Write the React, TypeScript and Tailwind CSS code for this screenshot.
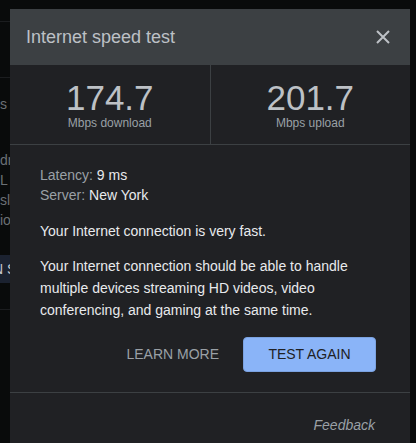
import React from "react";

const font = { fontFamily: '"Liberation Sans", Arial, sans-serif' };

function CloseIcon() {
  return (
    <svg width="14" height="14" viewBox="0 0 14 14" fill="none">
      <path d="M1 1L13 13M13 1L1 13" stroke="#bdc1c6" strokeWidth="2" />
    </svg>
  );
}

function Stat({ value, label }: { value: string; label: string }) {
  return (
    <div className="flex flex-1 flex-col items-center pt-[15px]">
      <div className="text-[35px] leading-[36px] text-[#bdc1c6]">{value}</div>
      <div className="text-[12px] leading-[14px] text-[#9aa0a6]">{label}</div>
    </div>
  );
}

export default function App() {
  return (
    <div className="relative h-[443px] w-[416px] overflow-hidden bg-[#090b0b]" style={font}>
      {/* page behind the dialog, visible only at the left edge */}
      <div className="flex w-[10px] flex-col overflow-hidden">
        <div className="h-[22px] w-[40px] border-b border-[#1b1d1f]" />
        <div className="h-[56px] w-[40px] border-b border-[#1b1d1f]" />
        <div className="w-[40px] whitespace-nowrap pt-[17px] text-[14px] leading-[18px] text-[#6b7075]">s t</div>
        <div className="w-[40px] whitespace-nowrap pt-[37px] text-[14px] leading-[20px] text-[#6b7075]">
          <div>dr</div>
          <div>L n</div>
          <div>sl</div>
          <div>io</div>
        </div>
        <div className="mt-[25px] h-[28px] w-[40px] whitespace-nowrap bg-[#1b2230] text-[14px] leading-[28px] text-[#c4c8cd]">
          <span className="ml-[-7px]">N S</span>
        </div>
        <div className="h-[27px] w-[40px] border-b border-[#1b1d1f]" />
      </div>

      {/* dialog */}
      <div className="absolute left-[10px] top-[9px] w-[400px] bg-[#202124]">
        <div className="flex h-[56px] items-center justify-between bg-[#3c4043] pl-[16px] pr-[20px]">
          <div className="text-[18px] text-[#bdc1c6]">Internet speed test</div>
          <CloseIcon />
        </div>

        <div className="flex h-[80px] border-b border-[#3c4043]">
          <Stat value="174.7" label="Mbps download" />
          <div className="w-px bg-[#3c4043]" />
          <Stat value="201.7" label="Mbps upload" />
        </div>

        <div className="px-[30px] pt-[20px]">
          <div className="text-[14px] leading-[20px]">
            <div>
              <span className="text-[#9aa0a6]">Latency: </span>
              <span className="text-[#e8eaed]">9 ms</span>
            </div>
            <div>
              <span className="text-[#9aa0a6]">Server: </span>
              <span className="text-[#e8eaed]">New York</span>
            </div>
          </div>
          <p className="mt-[15px] text-[14px] leading-[22px] text-[#e8eaed]">
            Your Internet connection is very fast.
          </p>
          <p className="mt-[13px] text-[14px] leading-[22px] text-[#e8eaed]">
            Your Internet connection should be able to handle multiple devices streaming HD videos, video
            conferencing, and gaming at the same time.
          </p>
          <div className="mt-[16px] flex items-center justify-end gap-[24px] pr-[4px]">
            <button className="text-[14px] text-[#9aa0a6]">LEARN MORE</button>
            <button className="h-[35px] w-[133px] rounded-[4px] border border-[#7ba2e0] bg-[#8ab4f8] text-[14px] text-[#202124]">
              TEST AGAIN
            </button>
          </div>
        </div>

        <div className="mt-[20px] border-t border-[#3c4043]" />
        <div className="flex justify-end pr-[35px] pt-[22px] pb-[20px]">
          <span className="text-[14px] italic text-[#9aa0a6]">Feedback</span>
        </div>
      </div>
    </div>
  );
}
